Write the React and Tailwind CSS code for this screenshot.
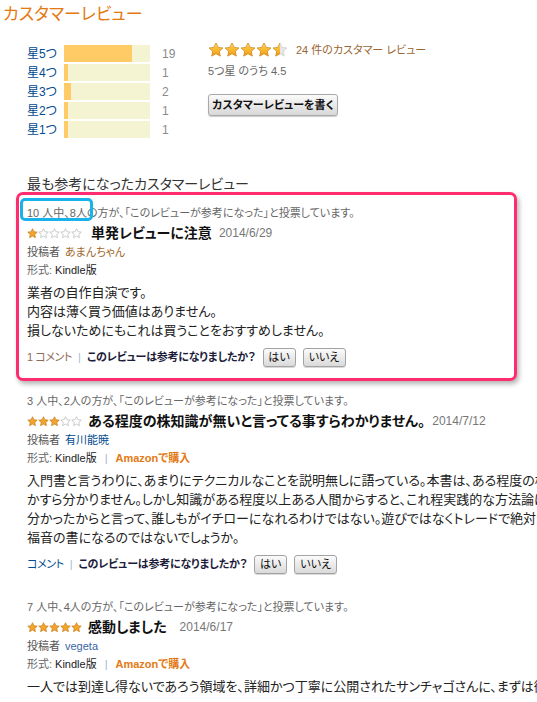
import React from 'react';

const STAR = 'M12 1.5l3.1 6.6 7.2.9-5.3 5 1.4 7.1L12 17.6l-6.4 3.5 1.4-7.1-5.3-5 7.2-.9z';

function BigStars({ value }) {
  return (
    <div className="flex">
      {[0, 1, 2, 3, 4].map(i => {
        const part = Math.max(0, Math.min(1, value - i));
        return (
          <svg key={i} width="16" height="16" viewBox="0 0 24 24">
            <defs>
              <linearGradient id={`gold${i}`} x1="0" x2="0" y1="0" y2="1">
                <stop offset="0" stopColor="#ffd95a" />
                <stop offset="1" stopColor="#f09a10" />
              </linearGradient>
              <clipPath id={`cut${i}`}>
                <rect x="0" y="0" width={24 * part} height="24" />
              </clipPath>
            </defs>
            <path d={STAR} fill="#e6e6e6" stroke="#c8c8c8" strokeWidth="1" />
            <path d={STAR} fill={`url(#gold${i})`} stroke="#d88a0c" strokeWidth="1" clipPath={`url(#cut${i})`} />
          </svg>
        );
      })}
    </div>
  );
}

function SmallStars({ value }) {
  return (
    <div className="flex">
      {[0, 1, 2, 3, 4].map(i => (
        <svg key={i} width="11" height="11" viewBox="0 0 24 24">
          {i < value
            ? <path d={STAR} fill="#f2a52c" stroke="#c47a18" strokeWidth="1.5" />
            : <path d={STAR} fill="#fff" stroke="#b4b4b4" strokeWidth="1.5" />}
        </svg>
      ))}
    </div>
  );
}

function Button({ children, className = '' }) {
  return (
    <span className={`inline-flex items-center justify-center h-[19px] border border-[#a3a3a3] rounded-[3px] bg-gradient-to-b from-[#fbfbfb] to-[#dadada] text-[11px] text-[#111] shadow-[0_1px_0_rgba(0,0,0,0.15)] ${className}`}>
      {children}
    </span>
  );
}

const histogram = [
  { label: '星5つ', count: 19 },
  { label: '星4つ', count: 1 },
  { label: '星3つ', count: 2 },
  { label: '星2つ', count: 1 },
  { label: '星1つ', count: 1 },
];

const reviews = [
  {
    votes: '10 人中、8人',
    rating: 1,
    title: '単発レビューに注意',
    titleGap: 'ml-[9px]',
    date: '2014/6/29',
    dateGap: 'ml-[7px]',
    author: 'あまんちゃん',
    authorColor: 'text-[#a0662a]',
    amazon: false,
    body: [
      '業者の自作自演です。',
      '内容は薄く買う価値はありません。',
      '損しないためにもこれは買うことをおすすめしません。',
    ],
    comment: '1 コメント',
    commentColor: 'text-[#8d6a58]',
  },
  {
    votes: '3 人中、2人',
    rating: 3,
    title: 'ある程度の株知識が無いと言ってる事すらわかりません。',
    titleGap: 'ml-[6px]',
    date: '2014/7/12',
    dateGap: 'ml-[7px]',
    author: '有川能暁',
    authorColor: 'text-[#004b91]',
    amazon: true,
    body: [
      '入門書と言うわりに、あまりにテクニカルなことを説明無しに語っている。本書は、ある程度の株に',
      'かすら分かりません。しかし知識がある程度以上ある人間からすると、これ程実践的な方法論はな',
      '分かったからと言って、誰しもがイチローになれるわけではない。遊びではなくトレードで絶対負け',
      '福音の書になるのではないでしょうか。',
    ],
    comment: 'コメント',
    commentColor: 'text-[#004b91]',
  },
  {
    votes: '7 人中、4人',
    rating: 5,
    title: '感動しました',
    titleGap: 'ml-[6px]',
    date: '2014/6/17',
    dateGap: 'ml-[13px]',
    author: 'vegeta',
    authorColor: 'text-[#3a64a8]',
    amazon: true,
    body: [
      '一人では到達し得ないであろう領域を、詳細かつ丁寧に公開されたサンチャゴさんに、まずは御礼',
    ],
    comment: null,
  },
];

function Review({ r }) {
  return (
    <div className="pl-[8px]">
      <div className="h-[16px] flex items-center text-[11px] text-[#666] whitespace-nowrap">
        {r.votes}の方が、「このレビューが参考になった」と投票しています。
      </div>
      <div className="h-[24px] flex items-center whitespace-nowrap">
        <SmallStars value={r.rating} />
        <span className={`${r.titleGap} text-[14px] font-bold text-[#111]`}>{r.title}</span>
        <span className={`${r.dateGap} text-[12px] text-[#777]`}>{r.date}</span>
      </div>
      <div className="h-[14px] flex items-center text-[11px] whitespace-nowrap">
        <span className="text-[#555]">投稿者</span>
        <span className={`ml-[5px] ${r.authorColor}`}>{r.author}</span>
      </div>
      <div className="h-[22px] flex items-center text-[11px] whitespace-nowrap">
        <span className="text-[#666]">形式:</span>
        <span className="ml-[3px] text-[#222]">Kindle版</span>
        {r.amazon && (
          <>
            <span className="mx-[8px] text-[#9fb4c8]">|</span>
            <span className="font-bold text-[#e47911]">Amazonで購入</span>
          </>
        )}
      </div>
      <div className="mt-[2px] text-[13px] leading-[19px] text-[#222] whitespace-nowrap">
        {r.body.map((line, i) => <div key={i}>{line}</div>)}
      </div>
      {r.comment && (
        <div className="mt-[6px] h-[22px] flex items-center text-[11px] whitespace-nowrap">
          <span className={`${r.commentColor} tracking-[-0.4px]`}>{r.comment}</span>
          <span className="mx-[6px] text-[#9fbcd4]">|</span>
          <span className="font-bold text-[#1c1c3a] tracking-[-0.2px]">このレビューは参考になりましたか？</span>
          <Button className="ml-[7px] w-[33px]">はい</Button>
          <Button className="ml-[7px] w-[43px]">いいえ</Button>
        </div>
      )}
    </div>
  );
}

export default function App() {
  return (
    <div className="w-[537px] h-[702px] overflow-hidden bg-white font-['Liberation_Sans','Noto_Sans_CJK_JP',sans-serif] [font-feature-settings:'palt']">
      <div className="h-[30px] pl-[3px] flex items-center text-[17px] text-[#e47911]">カスタマーレビュー</div>

      <div className="flex items-start mt-[15px]">
        <div className="pl-[27px] flex flex-col gap-[2px]">
          {histogram.map(h => (
            <div key={h.label} className="flex items-center h-[17px]">
              <span className="w-[37px] text-[12px] text-[#004b91]">{h.label}</span>
              <div className="w-[86px] h-[17px] bg-[#f4f4d2]">
                <div className="h-full bg-[#fecb66]" style={{ width: `${Math.max(3, (h.count / 24) * 86)}px` }} />
              </div>
              <span className="ml-[12px] w-[20px] text-[12px] text-[#8a8a8a]">{h.count}</span>
            </div>
          ))}
        </div>
        <div className="ml-[26px] -mt-[3px]">
          <div className="h-[16px] flex items-center">
            <BigStars value={4.5} />
            <span className="ml-[8px] text-[11px] text-[#996633] whitespace-nowrap">24 件のカスタマー レビュー</span>
          </div>
          <div className="mt-[6px] h-[14px] flex items-center text-[11px] text-[#666]">5つ星 のうち 4.5</div>
          <div className="mt-[16px] w-[130px] h-[22px] flex items-center justify-center border border-[#a9a9a9] rounded-[3px] bg-gradient-to-b from-[#fbfbfb] to-[#d8d8d8] shadow-[0_1px_1px_rgba(0,0,0,0.2)] text-[11px] font-bold text-[#111]">
            カスタマーレビューを書く
          </div>
        </div>
      </div>

      <div className="mt-[38px] h-[16px] pl-[27px] flex items-center text-[14px] text-[#333]">最も参考になったカスタマーレビュー</div>

      <div className="relative ml-[16px] w-[501px] border-[3px] border-[#ff2d6f] rounded-[7px] bg-white shadow-[2px_3px_5px_rgba(0,0,0,0.3)] pt-[10px] pb-[10px]">
        <div className="absolute left-[1px] top-[3px] w-[73px] h-[23px] border-[3px] border-[#19b2ea] rounded-[5px]" />
        <Review r={reviews[0]} />
      </div>

      <div className="mt-[12px] pl-[19px] flex flex-col gap-[24px]">
        <Review r={reviews[1]} />
        <Review r={reviews[2]} />
      </div>
    </div>
  );
}
